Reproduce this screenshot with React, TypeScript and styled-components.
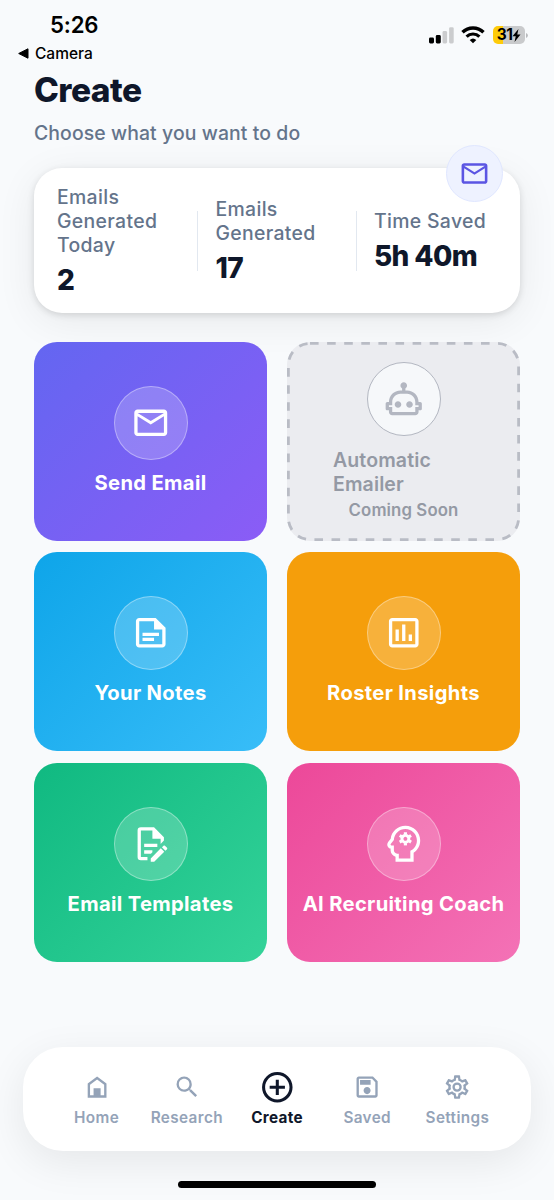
import React from "react";
import styled, { createGlobalStyle } from "styled-components";

const GlobalStyle = createGlobalStyle`
  *, *::before, *::after { box-sizing: border-box; }
  body {
    margin: 0;
    background: #f8fafc;
    font-family: Inter, "Liberation Sans", sans-serif;
    color: #0f172a;
  }
`;

const icons = {
  email:
    "M22 6C22 4.9 21.1 4 20 4H4C2.9 4 2 4.9 2 6V18C2 19.1 2.9 20 4 20H20C21.1 20 22 19.1 22 18V6M20 6L12 11L4 6H20M20 18H4V8L12 13L20 8V18Z",
  robot:
    "M17.5 15.5C17.5 16.61 16.61 17.5 15.5 17.5S13.5 16.61 13.5 15.5 14.4 13.5 15.5 13.5 17.5 14.4 17.5 15.5M8.5 13.5C7.4 13.5 6.5 14.4 6.5 15.5S7.4 17.5 8.5 17.5 10.5 16.61 10.5 15.5 9.61 13.5 8.5 13.5M23 15V18C23 18.55 22.55 19 22 19H21V20C21 21.11 20.11 22 19 22H5C3.9 22 3 21.11 3 20V19H2C1.45 19 1 18.55 1 18V15C1 14.45 1.45 14 2 14H3C3 10.13 6.13 7 10 7H11V5.73C10.4 5.39 10 4.74 10 4C10 2.9 10.9 2 12 2S14 2.9 14 4C14 4.74 13.6 5.39 13 5.73V7H14C17.87 7 21 10.13 21 14H22C22.55 14 23 14.45 23 15M21 16H19V14C19 11.24 16.76 9 14 9H10C7.24 9 5 11.24 5 14V16H3V17H5V20H19V17H21V16Z",
  note:
    "M15 3H5C3.89 3 3 3.89 3 5V19C3 20.11 3.89 21 5 21H19C20.11 21 21 20.11 21 19V9L15 3M19 19H5V5H14V10H19V19M17 14H7V12H17V14M14 17H7V15H14",
  chart:
    "M9 17H7V10H9V17M13 17H11V7H13V17M17 17H15V13H17V17M19 19H5V5H19V19M19 3H5C3.9 3 3 3.9 3 5V19C3 20.1 3.9 21 5 21H19C20.1 21 21 20.1 21 19V5C21 3.9 20.1 3 19 3Z",
  template:
    "M8,12H16V14H8V12M10,20H6V4H13V9H18V12.1L20,10.1V8L14,2H6A2,2 0 0,0 4,4V20A2,2 0 0,0 6,22H10V20M8,18H12.1L13,17.1V16H8V18M20.2,13C20.3,13 20.5,13.1 20.6,13.2L21.9,14.5C22.1,14.7 22.1,15.1 21.9,15.3L20.9,16.3L18.8,14.2L19.8,13.2C19.9,13.1 20,13 20.2,13M20.2,16.9L14.1,23H12V20.9L18.1,14.8L20.2,16.9Z",
  head:
    "M13 3C16.88 3 20 6.14 20 10C20 12.8 18.37 15.19 16 16.31V21H9V18H8C6.89 18 6 17.11 6 16V13H4.5C4.08 13 3.84 12.5 4.08 12.19L6 9.66C6.19 5.95 9.23 3 13 3M13 1C8.41 1 4.61 4.42 4.06 8.9L2.5 11L2.47 11L2.45 11.03C1.9 11.79 1.83 12.79 2.26 13.62C2.62 14.31 3.26 14.79 4 14.94V16C4 17.85 5.28 19.42 7 19.87V23H18V17.5C20.5 15.83 22 13.06 22 10C22 5.03 17.96 1 13 1Z",
  home: "M9,13H15V19H18V10L12,5.5L6,10V19H9V13M4,21V9L12,3L20,9V21H4Z",
  search:
    "M9.5,3A6.5,6.5 0 0,1 16,9.5C16,11.11 15.41,12.59 14.44,13.73L14.71,14H15.5L20.5,19L19,20.5L14,15.5V14.71L13.73,14.44C12.59,15.41 11.11,16 9.5,16A6.5,6.5 0 0,1 3,9.5A6.5,6.5 0 0,1 9.5,3M9.5,5C7,5 5,7 5,9.5C5,12 7,14 9.5,14C12,14 14,12 14,9.5C14,7 12,5 9.5,5Z",
  plus:
    "M12,20C7.59,20 4,16.41 4,12C4,7.59 7.59,4 12,4C16.41,4 20,7.59 20,12C20,16.41 16.41,20 12,20M12,2A10,10 0 0,0 2,12A10,10 0 0,0 12,22A10,10 0 0,0 22,12A10,10 0 0,0 12,2M13,7H11V11H7V13H11V17H13V13H17V11H13V7Z",
  save:
    "M17 3H5C3.89 3 3 3.9 3 5V19C3 20.1 3.89 21 5 21H19C20.1 21 21 20.1 21 19V7L17 3M19 19H5V5H16.17L19 7.83V19M12 12C10.34 12 9 13.34 9 15S10.34 18 12 18 15 16.66 15 15 13.66 12 12 12M6 6H15V10H6V6Z",
  cog:
    "M12,8A4,4 0 0,1 16,12A4,4 0 0,1 12,16A4,4 0 0,1 8,12A4,4 0 0,1 12,8M12,10A2,2 0 0,0 10,12A2,2 0 0,0 12,14A2,2 0 0,0 14,12A2,2 0 0,0 12,10M10,22C9.75,22 9.54,21.82 9.5,21.58L9.13,18.93C8.5,18.68 7.96,18.34 7.44,17.94L4.95,18.95C4.73,19.03 4.46,18.95 4.34,18.73L2.34,15.27C2.21,15.05 2.27,14.78 2.46,14.63L4.57,12.97L4.5,12L4.57,11L2.46,9.37C2.27,9.22 2.21,8.95 2.34,8.73L4.34,5.27C4.46,5.05 4.73,4.96 4.95,5.05L7.44,6.05C7.96,5.66 8.5,5.32 9.13,5.07L9.5,2.42C9.54,2.18 9.75,2 10,2H14C14.25,2 14.46,2.18 14.5,2.42L14.87,5.07C15.5,5.32 16.04,5.66 16.56,6.05L19.05,5.05C19.27,4.96 19.54,5.05 19.66,5.27L21.66,8.73C21.79,8.95 21.73,9.22 21.54,9.37L19.43,11L19.5,12L19.43,13L21.54,14.63C21.73,14.78 21.79,15.05 21.66,15.27L19.66,18.73C19.54,18.95 19.27,19.04 19.05,18.95L16.56,17.95C16.04,18.34 15.5,18.68 14.87,18.93L14.5,21.58C14.46,21.82 14.25,22 14,22H10M11.25,4L10.88,6.61C9.68,6.86 8.62,7.5 7.85,8.39L5.44,7.35L4.69,8.65L6.8,10.2C6.4,11.37 6.4,12.64 6.8,13.8L4.68,15.36L5.43,16.66L7.86,15.62C8.63,16.5 9.68,17.14 10.87,17.38L11.24,20H12.76L13.13,17.39C14.32,17.14 15.37,16.5 16.14,15.62L18.57,16.66L19.32,15.36L17.2,13.81C17.6,12.64 17.6,11.37 17.2,10.2L19.31,8.65L18.56,7.35L16.15,8.39C15.38,7.5 14.32,6.86 13.12,6.62L12.75,4H11.25Z",
};

type IconName = keyof typeof icons;

function Icon({ name, size }: { name: IconName; size: number }) {
  return (
    <svg width={size} height={size} viewBox="0 0 24 24" fill="currentColor" fillRule="evenodd">
      <path d={icons[name]} />
      {name === "head" && (
        <g transform="translate(13 9)" fill="none" stroke="currentColor">
          <circle r="2.1" strokeWidth="1.8" />
          {[0, 60, 120, 180, 240, 300].map((angle) => (
            <path key={angle} d="M0 -2.6V-4" strokeWidth="1.9" transform={`rotate(${angle})`} />
          ))}
        </g>
      )}
    </svg>
  );
}

const Screen = styled.div`
  width: 554px;
  height: 1200px;
  display: flex;
  flex-direction: column;
  background: #f8fafc;
  overflow: hidden;
`;

const StatusBar = styled.div`
  height: 68px;
  flex: none;
  display: flex;
  justify-content: space-between;
  padding: 11px 26px 0 18px;
  color: #000;
`;

const Clock = styled.div`
  padding-left: 32px;
  font-size: 22.2px;
  line-height: 28px;
  font-weight: 600;
  letter-spacing: -0.2px;
`;

const BackLink = styled.div`
  display: flex;
  align-items: center;
  gap: 6px;
  margin-top: 4px;
  font-size: 15.5px;
  line-height: 21px;
  font-weight: 500;
  letter-spacing: 0;
`;

const StatusIcons = styled.div`
  display: flex;
  align-items: center;
  height: 20px;
  margin-top: 14px;
`;

const Battery = styled.div`
  display: flex;
  align-items: center;
  justify-content: center;
  width: 32px;
  height: 18px;
  margin-left: 8px;
  border-radius: 5px;
  background: linear-gradient(90deg, #fecb0a 10.5px, #c9cacc 10.5px);
  font-size: 15.5px;
  line-height: 18px;
  font-weight: 700;
  letter-spacing: -0.5px;
`;

const Header = styled.header`
  padding: 0 34px;
`;

const Title = styled.h1`
  margin: 0;
  font-size: 33.5px;
  line-height: 44px;
  font-weight: 800;
  letter-spacing: -0.55px;
`;

const Subtitle = styled.p`
  margin: 8px 0 0;
  font-size: 19.4px;
  line-height: 26px;
  font-weight: 500;
  letter-spacing: 0.1px;
  color: #64748b;
`;

const StatsCard = styled.section`
  position: relative;
  flex: none;
  display: flex;
  align-items: center;
  height: 145px;
  margin: 22px 34px 0;
  padding: 0 23px;
  border-radius: 28px;
  background: #fff;
  box-shadow: 0 8px 40px rgba(0, 0, 0, 0.07), 0 2px 7px rgba(0, 0, 0, 0.13);
`;

const Stat = styled.div`
  flex: 1 1 0;
  min-width: 0;
`;

const StatLabel = styled.div<{ $width?: number }>`
  width: ${(p) => (p.$width ? `${p.$width}px` : "auto")};
  font-size: 19.4px;
  line-height: 24px;
  font-weight: 500;
  letter-spacing: 0.34px;
  white-space: normal;
  color: #64748b;
`;

const StatValue = styled.div`
  margin-top: 6px;
  padding-top: 1px;
  font-size: 28px;
  line-height: 33px;
  font-weight: 800;
  letter-spacing: -0.6px;
  white-space: nowrap;
`;

const Divider = styled.div`
  width: 1.4px;
  height: 60px;
  margin: 0 17px;
  background: #e2e8f0;
`;

const MailBadge = styled.div`
  position: absolute;
  top: -23px;
  right: 17px;
  width: 57px;
  height: 57px;
  display: flex;
  align-items: center;
  justify-content: center;
  border: 1.5px solid #e0e7ff;
  border-radius: 50%;
  background: #eef2ff;
  color: #5b55e3;
`;

const Tiles = styled.main`
  display: grid;
  grid-template-columns: 233px 233px;
  grid-auto-rows: 199px;
  gap: 11.5px 20px;
  margin: 28.6px 34px 0;
`;

const Tile = styled.button<{ $background: string }>`
  position: relative;
  display: flex;
  flex-direction: column;
  align-items: center;
  justify-content: center;
  margin: 0;
  padding: 0 0 1px;
  border: 0;
  border-radius: 23px;
  background: ${(p) => p.$background};
  color: #fff;
  font-family: inherit;

  &:disabled {
    padding-bottom: 0;
  }
`;

const IconCircle = styled.span<{ $muted?: boolean }>`
  display: flex;
  align-items: center;
  justify-content: center;
  width: 74px;
  height: 74px;
  flex: none;
  border-radius: 50%;
  border: 1.4px solid ${(p) => (p.$muted ? "#b3b7c1" : "rgba(255, 255, 255, 0.35)")};
  background: ${(p) => (p.$muted ? "#f6f8fa" : "rgba(255, 255, 255, 0.2)")};
  color: ${(p) => (p.$muted ? "#b3b7c1" : "#fff")};
`;

const TileLabel = styled.span`
  margin-top: 10px;
  font-size: 20.2px;
  line-height: 26px;
  font-weight: 700;
  letter-spacing: 0.33px;
  white-space: nowrap;
`;

const MutedLabel = styled.span`
  width: 141px;
  margin-top: 12px;
  font-size: 19.5px;
  line-height: 24px;
  font-weight: 600;
  letter-spacing: 0.12px;
  text-align: left;
  color: #9499a4;
`;

const MutedNote = styled.span`
  margin-top: 3px;
  font-size: 16.8px;
  line-height: 22px;
  font-weight: 600;
  letter-spacing: 0.1px;
  color: #9499a4;
`;

const DashedOutline = styled.svg`
  position: absolute;
  inset: 0;
`;

const TabBar = styled.nav`
  flex: none;
  display: flex;
  height: 104px;
  margin: 85.4px 23px 0;
  padding: 0 28.5px 0 28.5px;
  border-radius: 40px;
  background: #fff;
  box-shadow: 0 11px 42px rgba(0, 0, 0, 0.08);
`;

const Tab = styled.a<{ $active?: boolean }>`
  flex: 1 1 0;
  display: flex;
  flex-direction: column;
  align-items: center;
  padding-top: 20px;
  font-size: 15.3px;
  line-height: 21px;
  font-weight: ${(p) => (p.$active ? 700 : 600)};
  letter-spacing: ${(p) => (p.$active ? "0.3px" : "0.38px")};
  color: ${(p) => (p.$active ? "#0f172a" : "#94a3b8")};
`;

const TabIcon = styled.span`
  display: flex;
  align-items: center;
  height: 40px;
`;

const HomeIndicator = styled.div`
  flex: none;
  align-self: center;
  width: 198px;
  height: 7px;
  margin-top: 30.5px;
  border-radius: 4px;
  background: #000;
`;

const tiles: { label: string; icon: IconName; background: string }[] = [
  { label: "Send Email", icon: "email", background: "linear-gradient(135deg, #6366f1, #8b5cf6)" },
  { label: "Your Notes", icon: "note", background: "linear-gradient(135deg, #0ea5e9, #38bdf8)" },
  { label: "Roster Insights", icon: "chart", background: "#f59e0b" },
  { label: "Email Templates", icon: "template", background: "linear-gradient(135deg, #10b981, #34d399)" },
  { label: "AI Recruiting Coach", icon: "head", background: "linear-gradient(135deg, #ec4899, #f472b6)" },
];

const tabs: { label: string; icon: IconName; active?: boolean }[] = [
  { label: "Home", icon: "home" },
  { label: "Research", icon: "search" },
  { label: "Create", icon: "plus", active: true },
  { label: "Saved", icon: "save" },
  { label: "Settings", icon: "cog" },
];

function ActionTile({ label, icon, background }: (typeof tiles)[number]) {
  return (
    <Tile $background={background}>
      <IconCircle>
        <Icon name={icon} size={39.5} />
      </IconCircle>
      <TileLabel>{label}</TileLabel>
    </Tile>
  );
}

export default function App() {
  const [sendEmail, ...otherTiles] = tiles;
  return (
    <Screen>
      <GlobalStyle />
      <StatusBar>
        <div>
          <Clock>5:26</Clock>
          <BackLink>
            <svg width="11" height="11" viewBox="0 0 11 11">
              <path d="M.7 5.5 10 .8v9.4Z" stroke="#000" strokeWidth="1" strokeLinejoin="round" />
            </svg>
            Camera
          </BackLink>
        </div>
        <StatusIcons>
          <svg width="25" height="17" viewBox="0 0 25 17">
            <rect x="0" y="10.5" width="5" height="6" rx="1.4" />
            <rect x="6.8" y="8" width="5" height="8.5" rx="1.4" />
            <rect x="13.5" y="4" width="4.6" height="12.5" rx="1.4" fill="#cbccce" />
            <rect x="20.1" y="0.2" width="4.6" height="16.3" rx="1.4" fill="#cbccce" />
          </svg>
          <svg width="24" height="18" viewBox="0 0 24 18" fill="none" stroke="#000" style={{ marginLeft: 7 }}>
            <path d="M1.5 6.3a15 15 0 0 1 21 0" strokeWidth="3.4" />
            <path d="M5.6 10.6a9.2 9.2 0 0 1 12.8 0" strokeWidth="3.2" />
            <path d="M12 17.3 8.7 14a4.8 4.8 0 0 1 6.6 0Z" fill="#000" stroke="none" />
          </svg>
          <Battery>
            31
            <svg width="9" height="13" viewBox="0 0 8 12">
              <path d="M5.8 0 .3 6.8h3L2.2 12l5.5-7h-3Z" />
            </svg>
          </Battery>
          <svg width="2" height="5" viewBox="0 0 2 5" style={{ marginLeft: 1 }}>
            <path d="M0 0a2.6 2.6 0 0 1 0 5Z" fill="#b9babd" />
          </svg>
        </StatusIcons>
      </StatusBar>

      <Header>
        <Title>Create</Title>
        <Subtitle>Choose what you want to do</Subtitle>
      </Header>

      <StatsCard>
        <Stat>
          <StatLabel $width={110}>Emails Generated Today</StatLabel>
          <StatValue>2</StatValue>
        </Stat>
        <Divider />
        <Stat>
          <StatLabel $width={110}>Emails Generated</StatLabel>
          <StatValue>17</StatValue>
        </Stat>
        <Divider />
        <Stat>
          <StatLabel>Time Saved</StatLabel>
          <StatValue>5h 40m</StatValue>
        </Stat>
        <MailBadge>
          <Icon name="email" size={31} />
        </MailBadge>
      </StatsCard>

      <Tiles>
        <ActionTile {...sendEmail} />
        <Tile $background="#ebecf0" disabled>
          <DashedOutline width="233" height="199" viewBox="0 0 233 199" fill="none">
            <rect
              x="1.4"
              y="1.4"
              width="230.2"
              height="196.2"
              rx="21.6"
              stroke="#b9bcc5"
              strokeWidth="2.8"
              strokeDasharray="8.6 8.5"
            />
          </DashedOutline>
          <IconCircle $muted>
            <Icon name="robot" size={39.5} />
          </IconCircle>
          <MutedLabel>Automatic Emailer</MutedLabel>
          <MutedNote>Coming Soon</MutedNote>
        </Tile>
        {otherTiles.map((tile) => (
          <ActionTile key={tile.label} {...tile} />
        ))}
      </Tiles>

      <TabBar>
        {tabs.map((tab) => (
          <Tab key={tab.label} $active={tab.active}>
            <TabIcon>
              <Icon name={tab.icon} size={tab.active ? 36.6 : 28.2} />
            </TabIcon>
            {tab.label}
          </Tab>
        ))}
      </TabBar>
      <HomeIndicator />
    </Screen>
  );
}
